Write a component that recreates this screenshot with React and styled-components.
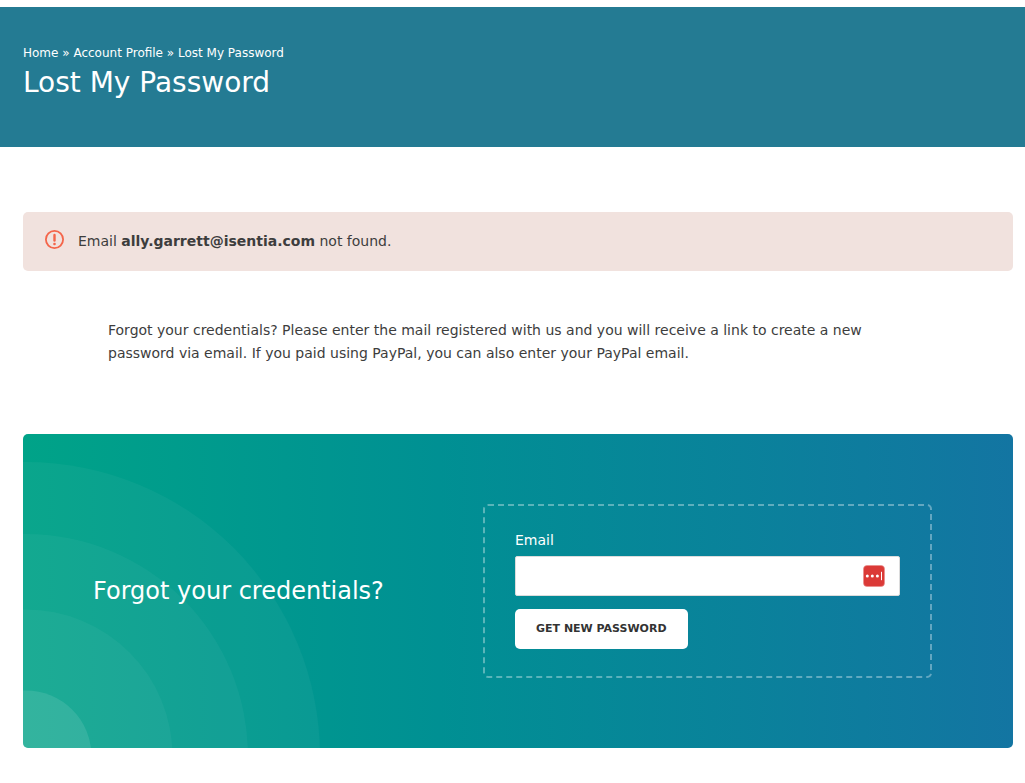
import React from "react";
import styled, { createGlobalStyle } from "styled-components";

const GlobalStyle = createGlobalStyle`
  *, *::before, *::after { box-sizing: border-box; }
  body {
    margin: 0;
    background: #fff;
    color: #3d3d3d;
    font-family: Verdana, "DejaVu Sans", sans-serif;
    font-size: 14px;
    line-height: 23px;
  }
`;

const Page = styled.div`
  padding-top: 7px;
`;

const Banner = styled.header`
  min-height: 140px;
  padding: 36px 12px 40px 23px;
  background: #247b93;
  color: #fff;
`;

const Breadcrumbs = styled.nav`
  font-size: 12px;
  line-height: 20px;
`;

const Crumb = styled.a`
  color: inherit;
  text-decoration: none;
`;

const Title = styled.h1`
  margin: 0;
  font-size: 28px;
  line-height: 40px;
  font-weight: 400;
`;

const Main = styled.main`
  padding: 65px 12px 35px 23px;
`;

const Alert = styled.div`
  display: flex;
  align-items: flex-start;
  gap: 13px;
  padding: 18px 22px;
  border-radius: 5px;
  background: #f1e2de;
`;

const AlertIcon = styled.svg`
  flex: none;
  width: 20px;
  height: 20px;
`;

const Intro = styled.p`
  max-width: 820px;
  margin: 48px 85px 69px;
`;

const Card = styled.section`
  position: relative;
  display: grid;
  grid-template-columns: 390fr 449fr;
  align-items: center;
  padding: 70px 81px 70px 70px;
  border-radius: 5px;
  overflow: hidden;
  background: linear-gradient(90deg, #00a388 0%, #009093 42%, #1375a2 100%);
  color: #fff;
`;

const Rings = styled.svg`
  position: absolute;
  left: 0;
  bottom: 0;
  width: 300px;
  height: 290px;
`;

const CardTitle = styled.h2`
  position: relative;
  margin: 0;
  font-size: 24px;
  line-height: 36px;
  font-weight: 400;
`;

const Form = styled.form`
  display: flex;
  flex-direction: column;
  align-items: flex-start;
  padding: 23px 30px 27px;
  border: 2px dashed rgba(255, 255, 255, 0.35);
  border-radius: 5px;
`;

const Label = styled.label`
  margin-bottom: 4px;
`;

const Field = styled.div`
  position: relative;
  width: 100%;
  margin-bottom: 13px;
`;

const TextInput = styled.input`
  display: block;
  width: 100%;
  height: 40px;
  padding: 0 44px 0 12px;
  border: 1px solid #dcdcdc;
  border-radius: 2px;
  background: #fff;
  color: #3d3d3d;
  font: inherit;
`;

const ManagerBadge = styled.svg`
  position: absolute;
  top: 9px;
  right: 15px;
  width: 22px;
  height: 22px;
`;

const SubmitButton = styled.button`
  height: 40px;
  padding: 0 21px;
  border: 0;
  border-radius: 5px;
  background: #fff;
  color: #333;
  font-family: inherit;
  font-size: 11px;
  font-weight: 700;
  line-height: 20px;
  text-transform: uppercase;
  cursor: pointer;
`;

export default function App() {
  return (
    <>
      <GlobalStyle />
      <Page>
        <Banner>
          <Breadcrumbs aria-label="Breadcrumb">
            <Crumb href="#home">Home</Crumb> » <Crumb href="#account">Account Profile</Crumb> » <span>Lost My Password</span>
          </Breadcrumbs>
          <Title>Lost My Password</Title>
        </Banner>
        <Main>
          <Alert role="alert">
            <AlertIcon viewBox="0 0 20 20" fill="none" stroke="#f4654a" aria-hidden="true">
              <circle cx="9.5" cy="9.5" r="8.6" strokeWidth="1.8" />
              <path d="M9.5 5v5.6" strokeWidth="2.4" strokeLinecap="round" />
              <circle cx="9.5" cy="14" r="1.3" fill="#f4654a" stroke="none" />
            </AlertIcon>
            <span>
              Email <strong>ally.garrett@isentia.com</strong> not found.
            </span>
          </Alert>
          <Intro>
            Forgot your credentials? Please enter the mail registered with us and you will receive a
            link to create a new password via email. If you paid using PayPal, you can also enter
            your PayPal email.
          </Intro>
          <Card>
            <Rings viewBox="0 0 300 290" fill="#fff" aria-hidden="true">
              <circle cx="3" cy="298" r="294" fillOpacity="0.04" />
              <circle cx="3" cy="298" r="222" fillOpacity="0.04" />
              <circle cx="3" cy="298" r="146.5" fillOpacity="0.04" />
              <circle cx="3" cy="298" r="65.5" fillOpacity="0.1" />
            </Rings>
            <CardTitle>Forgot your credentials?</CardTitle>
            <Form onSubmit={(event) => event.preventDefault()}>
              <Label htmlFor="email">Email</Label>
              <Field>
                <TextInput id="email" type="email" name="email" />
                <ManagerBadge viewBox="0 0 22 22" aria-hidden="true">
                  <rect x="0.5" y="0.5" width="21" height="21" rx="3.5" fill="#db3a37" stroke="#e78b89" strokeWidth="0.6" />
                  <circle cx="4.3" cy="11" r="1.5" fill="#fff" />
                  <circle cx="9.3" cy="11" r="1.5" fill="#fff" />
                  <circle cx="14.4" cy="11" r="1.5" fill="#fff" />
                  <rect x="18" y="6.8" width="1" height="8.4" fill="#fff" />
                </ManagerBadge>
              </Field>
              <SubmitButton type="submit">Get new password</SubmitButton>
            </Form>
          </Card>
        </Main>
      </Page>
    </>
  );
}
